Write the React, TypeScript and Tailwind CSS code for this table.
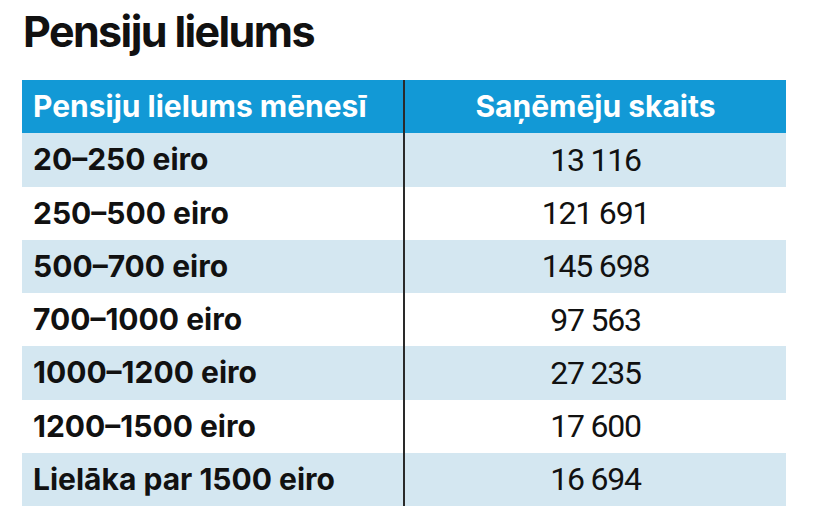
import React from "react";

const rows: [string, string][] = [
  ["20–250 eiro", "13 116"],
  ["250–500 eiro", "121 691"],
  ["500–700 eiro", "145 698"],
  ["700–1000 eiro", "97 563"],
  ["1000–1200 eiro", "27 235"],
  ["1200–1500 eiro", "17 600"],
  ["Lielāka par 1500 eiro", "16 694"],
];

export default function App() {
  return (
    <div className="w-[820px] h-[514px] bg-white overflow-hidden" style={{ fontFamily: "Inter, 'Noto Sans', sans-serif" }}>
      <h1 className="ml-[23px] pt-[10px] text-[43px] leading-none font-bold text-[#111] tracking-[-1.6px]">
        Pensiju lielums
      </h1>
      <div className="ml-[22px] mt-[27px] w-[764px] flex flex-col">
        <div className="flex h-[53.25px] bg-[#1299d6] text-white font-bold text-[30px]">
          <div className="w-[381px] flex items-center pl-[11px]">Pensiju lielums mēnesī</div>
          <div className="flex-1 flex items-center justify-center border-l-2 border-[#2a2a2a]">Saņēmēju skaits</div>
        </div>
        {rows.map(([a, b], i) => (
          <div
            key={a}
            className={"flex h-[53.25px] " + (i % 2 === 0 ? "bg-[#d4e7f1]" : "bg-white")}
          >
            <div className="w-[381px] flex items-center pl-[11px] font-bold text-[30px] text-[#111]">{a}</div>
            <div
              className="flex-1 flex items-center justify-center border-l-2 border-[#2a2a2a] text-[32px] font-normal text-[#111] tracking-[-1.2px]"
              style={{ fontFamily: "Roboto, sans-serif" }}
            >
              {b}
            </div>
          </div>
        ))}
      </div>
    </div>
  );
}
